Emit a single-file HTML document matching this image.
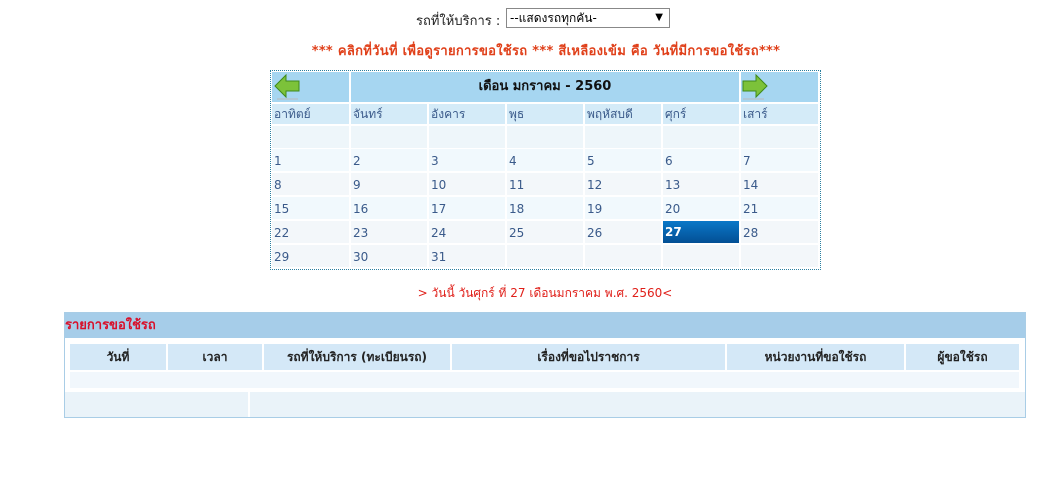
<!DOCTYPE html>
<html><head><meta charset="utf-8"><style>
*{margin:0;padding:0;box-sizing:border-box}
body{width:1059px;height:499px;background:#fff;position:relative;font-family:Tahoma,"DejaVu Sans","Liberation Sans",sans-serif;font-size:12px;overflow:hidden}
.a{position:absolute}
.c{position:absolute;padding-left:2px;color:#3a5a8a;font-size:12px;line-height:22px}
.r{position:absolute;left:272px;width:546px;height:22px}
.h{position:absolute;top:344px;height:26px;background:#d4e8f7;font-weight:bold;text-align:center;line-height:26px;color:#222}
</style></head><body>
<div class="a" style="left:416px;top:10px;font-size:13px;color:#222">รถที่ให้บริการ :</div>
<div class="a" style="left:506px;top:8px;width:164px;height:20px;border:1px solid #888;background:#fff;font-size:12px;line-height:18px;padding-left:3px">--แสดงรถทุกคัน-<span style="position:absolute;right:6px;font-size:10px">▼</span></div>
<div class="a" style="left:0;width:1092px;top:40px;text-align:center;color:#e0401a;font-weight:bold;font-size:13px;letter-spacing:0.3px">*** คลิกที่วันที่ เพื่อดูรายการขอใช้รถ *** สีเหลืองเข้ม คือ วันที่มีการขอใช้รถ***</div>
<div class="a" style="left:270px;top:70px;width:551px;height:200px;border:1px dotted #2a7fa0;background:#fff"></div>
<div class="a" style="left:272px;top:72px;width:77px;height:30px;background:#a6d6f1"></div>
<div class="a" style="left:351px;top:72px;width:388px;height:30px;background:#a6d6f1;text-align:center;line-height:30px;font-weight:bold;font-size:13px;color:#111">เดือน มกราคม - 2560</div>
<div class="a" style="left:741px;top:72px;width:77px;height:30px;background:#a6d6f1"></div>
<svg class="a" style="left:274px;top:73px" width="28" height="28" viewBox="0 0 28 28"><path d="M1 13 L12 2 L12 8 L25 8 L25 18 L12 18 L12 24 Z" fill="#7cc23a" stroke="#3f8a1a" stroke-width="1"/><line x1="3" y1="26" x2="24" y2="26" stroke="#bbb"/></svg>
<svg class="a" style="left:740px;top:73px" width="28" height="28" viewBox="0 0 28 28"><path d="M27 13 L16 2 L16 8 L3 8 L3 18 L16 18 L16 24 Z" fill="#7cc23a" stroke="#3f8a1a" stroke-width="1"/><line x1="3" y1="26" x2="24" y2="26" stroke="#bbb"/></svg>
<div class="a" style="left:272px;top:104px;width:546px;height:20px;background:#d4ebf8"></div>
<div class="r" style="top:126px;background:#eef6fa"></div>
<div class="r" style="top:149px;background:#f1f9fd"></div>
<div class="r" style="top:173px;background:#f3f7fa"></div>
<div class="r" style="top:197px;background:#f1f9fd"></div>
<div class="r" style="top:221px;background:#f3f7fa"></div>
<div class="r" style="top:245px;background:#f3f7fa"></div>
<div class="a" style="left:349px;top:104px;width:2px;height:164px;background:#fff"></div>
<div class="a" style="left:427px;top:104px;width:2px;height:164px;background:#fff"></div>
<div class="a" style="left:505px;top:104px;width:2px;height:164px;background:#fff"></div>
<div class="a" style="left:583px;top:104px;width:2px;height:164px;background:#fff"></div>
<div class="a" style="left:661px;top:104px;width:2px;height:164px;background:#fff"></div>
<div class="a" style="left:739px;top:72px;width:2px;height:196px;background:#fff"></div>
<div class="a" style="left:349px;top:72px;width:2px;height:30px;background:#fff"></div>
<div class="a" style="left:663px;top:221px;width:76px;height:22px;background:linear-gradient(#0a78c8,#034f94)"></div>
<div class="c" style="left:272px;top:103px">อาทิตย์</div><div class="c" style="left:351px;top:103px">จันทร์</div><div class="c" style="left:429px;top:103px">อังคาร</div><div class="c" style="left:507px;top:103px">พุธ</div><div class="c" style="left:585px;top:103px">พฤหัสบดี</div><div class="c" style="left:663px;top:103px">ศุกร์</div><div class="c" style="left:741px;top:103px">เสาร์</div>
<div class="c" style="left:272px;top:150px">1</div><div class="c" style="left:351px;top:150px">2</div><div class="c" style="left:429px;top:150px">3</div><div class="c" style="left:507px;top:150px">4</div><div class="c" style="left:585px;top:150px">5</div><div class="c" style="left:663px;top:150px">6</div><div class="c" style="left:741px;top:150px">7</div>
<div class="c" style="left:272px;top:174px">8</div><div class="c" style="left:351px;top:174px">9</div><div class="c" style="left:429px;top:174px">10</div><div class="c" style="left:507px;top:174px">11</div><div class="c" style="left:585px;top:174px">12</div><div class="c" style="left:663px;top:174px">13</div><div class="c" style="left:741px;top:174px">14</div>
<div class="c" style="left:272px;top:198px">15</div><div class="c" style="left:351px;top:198px">16</div><div class="c" style="left:429px;top:198px">17</div><div class="c" style="left:507px;top:198px">18</div><div class="c" style="left:585px;top:198px">19</div><div class="c" style="left:663px;top:198px">20</div><div class="c" style="left:741px;top:198px">21</div>
<div class="c" style="left:272px;top:222px">22</div><div class="c" style="left:351px;top:222px">23</div><div class="c" style="left:429px;top:222px">24</div><div class="c" style="left:507px;top:222px">25</div><div class="c" style="left:585px;top:222px">26</div><div class="c" style="left:663px;top:221px;color:#fff;font-weight:bold">27</div><div class="c" style="left:741px;top:222px">28</div>
<div class="c" style="left:272px;top:246px">29</div><div class="c" style="left:351px;top:246px">30</div><div class="c" style="left:429px;top:246px">31</div>
<div class="a" style="left:0;width:1090px;top:284px;text-align:center;color:#e0201a;font-size:12px">&gt; วันนี้ วันศุกร์ ที่ 27 เดือนมกราคม พ.ศ. 2560&lt;</div>
<div class="a" style="left:64px;top:312px;width:962px;height:106px;border:1px solid #a9cde6;background:#fff"></div>
<div class="a" style="left:65px;top:313px;width:960px;height:25px;background:#a6cde9;color:#d8102a;font-weight:bold;font-size:13px;line-height:26px">รายการขอใช้รถ</div>
<div class="a" style="left:65px;top:338px;width:960px;height:53px;background:#fff"></div>
<div class="h" style="left:70px;width:96px">วันที่</div>
<div class="h" style="left:168px;width:94px">เวลา</div>
<div class="h" style="left:264px;width:186px">รถที่ให้บริการ (ทะเบียนรถ)</div>
<div class="h" style="left:452px;width:273px">เรื่องที่ขอไปราชการ</div>
<div class="h" style="left:727px;width:177px">หน่วยงานที่ขอใช้รถ</div>
<div class="h" style="left:906px;width:113px">ผู้ขอใช้รถ</div>
<div class="a" style="left:70px;top:372px;width:949px;height:16px;background:#f1f7fc"></div>
<div class="a" style="left:65px;top:392px;width:183px;height:25px;background:#eaf3f9"></div>
<div class="a" style="left:250px;top:392px;width:775px;height:25px;background:#eaf3f9"></div>
</body></html>
